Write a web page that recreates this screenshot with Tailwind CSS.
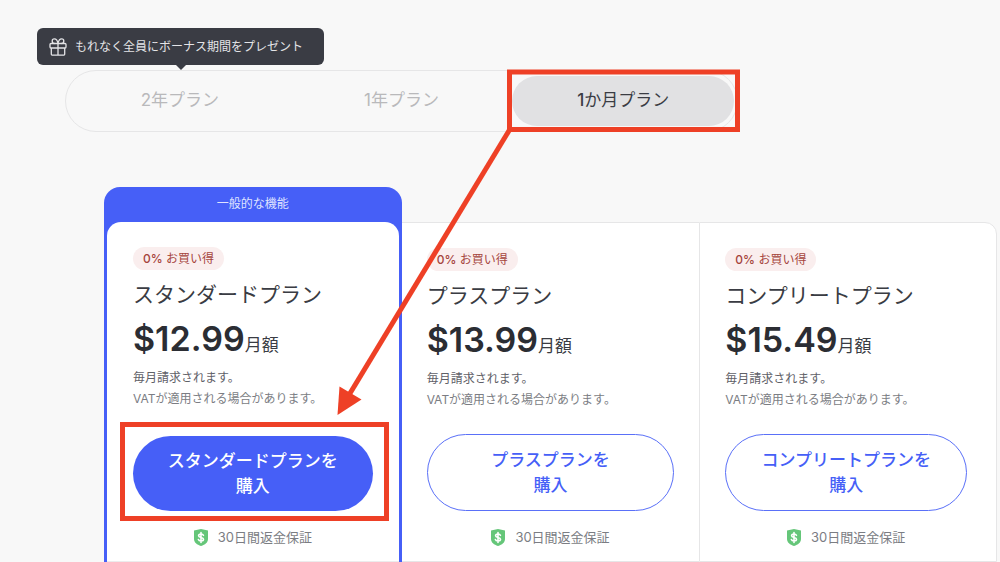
<!DOCTYPE html>
<html lang="ja">
<head>
  <meta charset="UTF-8">
  <meta name="viewport" content="width=device-width, initial-scale=1.0">
  <title>料金プラン</title>
  <script src="https://cdn.jsdelivr.net/npm/@tailwindcss/browser@4"></script>
</head>
<body class="relative bg-[#f8f8f8] font-['Inter','Noto_Sans_CJK_JP',sans-serif] text-[#3a3c43] overflow-x-hidden">
  <svg class="hidden">
    <symbol id="shield" viewBox="0 0 14 17">
      <path fill="#65c679" d="M7 0l7 1.6v8.2c0 3.9-2.9 6-7 7.2-4.100-1.200-7-3.300-7-7.200V1.600z"/>
      <path fill="none" stroke="#fff" stroke-width="1.6" stroke-linecap="round" d="M9.400 6.300C9 5.300 8.100 5 7 5 5.600 5 4.600 5.600 4.600 6.700c0 2.500 4.900 1.100 4.900 3.600C9.500 11.400 8.400 12 7 12s-2.300-.500-2.600-1.500M7 3.600v9.800"/>
    </symbol>
  </svg>

  <!-- Plan length -->
  <header class="relative pl-[65px] pr-[262px] pt-[70px]">
    <div class="absolute left-[37px] top-[28px] h-[37px] w-[287px] rounded-md bg-[#3a3c44] text-[#e4e4e7] flex items-center gap-2 px-3">
      <svg class="size-[18px] shrink-0" viewBox="0 0 18 18" fill="none" stroke="currentColor" stroke-width="1.300" stroke-linejoin="round">
        <rect x="1" y="5.500" width="16" height="4.500" rx="1"/>
        <path d="M2.300 10v6a1.200 1.200 0 0 0 1.200 1.200h11a1.200 1.200 0 0 0 1.200-1.200v-6M9 5.500v11.700M9 5.500C8.500 2.500 7 .900 5.300.900 3.900.900 3.200 1.900 3.200 3c0 1.500 1 2.500 2.300 2.500M9 5.500C9.500 2.500 11 .900 12.700.900c1.400 0 2.100 1 2.100 2.100 0 1.500-1 2.500-2.300 2.500"/>
      </svg>
      <span class="text-xs whitespace-nowrap">もれなく全員にボーナス期間をプレゼント</span>
      <svg class="absolute left-[139px] top-full w-[10px] h-[5px]" viewBox="0 0 10 5"><path fill="#3a3c44" d="M0 0h10L5 5z"/></svg>
    </div>
    <div role="tablist" class="grid grid-cols-3 rounded-full border border-[#e6e6e7] px-[3px] py-[5px] text-[17px] text-[#b9b9bb]">
      <button type="button" role="tab" aria-selected="false" class="h-[50px] rounded-full">2年プラン</button>
      <button type="button" role="tab" aria-selected="false" class="h-[50px] rounded-full">1年プラン</button>
      <button type="button" role="tab" aria-selected="true" class="h-[50px] rounded-full bg-[#e1e1e3] text-[#3a3c43]"><span class="font-medium">1</span>か月プラン</button>
    </div>
  </header>

  <!-- Plans -->
  <main class="grid grid-cols-3 items-end pl-[104px] pr-[3px] pt-[55px]">
    <section class="rounded-t-2xl bg-[#465ff7] px-[3px]">
      <p class="h-[35px] pt-px text-center text-xs leading-8 text-[#dfe3ff]">一般的な機能</p>
      <div class="rounded-t-[14px] bg-white border-b border-[#ececed] px-[26px] pt-[25px] pb-[13px]">
        <span class="block w-fit h-[23px] rounded-full bg-[#faeeee] px-[10px] text-xs leading-[23px] text-[#a5443c]"><span class="font-medium">0%</span> お買い得</span>
        <h2 class="mt-[11px] text-[21px] leading-7 whitespace-nowrap">スタンダードプラン</h2>
        <p class="mt-2 h-11 leading-[44px] whitespace-nowrap"><span class="text-[34px] font-semibold text-[#2b2d33]">$12.99</span><span class="text-[17px]">月額</span></p>
        <p class="mt-[6px] text-xs leading-[21px] text-[#5f6168]">毎月請求されます。</p>
        <p class="text-xs leading-[21px] text-[#7b7d83] whitespace-nowrap">VATが適用される場合があります。</p>
        <button type="button" class="mt-[27px] block w-full h-[75px] rounded-full bg-[#465ff7] text-[17px] leading-[25px] font-medium text-white">スタンダードプランを<br>購入</button>
        <p class="mt-4 flex items-center justify-center gap-[10px] text-[13px] leading-[21px] text-[#7b7d83]">
          <svg class="w-[14px] h-[17px]"><use href="#shield"/></svg>30日間返金保証
        </p>
      </div>
    </section>

    <section class="bg-white border-y border-[#e6e6e7] px-[25px] pt-[25px] pb-[13px]">
      <span class="block w-fit h-[23px] rounded-full bg-[#faeeee] px-[10px] text-xs leading-[23px] text-[#a5443c]"><span class="font-medium">0%</span> お買い得</span>
      <h2 class="mt-[11px] text-[21px] leading-7 whitespace-nowrap">プラスプラン</h2>
      <p class="mt-2 h-11 leading-[44px] whitespace-nowrap"><span class="text-[34px] font-semibold text-[#2b2d33]">$13.99</span><span class="text-[17px]">月額</span></p>
      <p class="mt-[6px] text-xs leading-[21px] text-[#5f6168]">毎月請求されます。</p>
      <p class="text-xs leading-[21px] text-[#7b7d83] whitespace-nowrap">VATが適用される場合があります。</p>
      <button type="button" class="mt-6 block w-full h-[77px] rounded-full border border-[#5a70f8] text-[17px] leading-[25px] font-medium text-[#465ff7]">プラスプランを<br>購入</button>
      <p class="mt-4 flex items-center justify-center gap-[10px] text-[13px] leading-[21px] text-[#7b7d83]">
        <svg class="w-[14px] h-[17px]"><use href="#shield"/></svg>30日間返金保証
      </p>
    </section>

    <section class="bg-white border border-[#e6e6e7] rounded-tr-xl pl-[25px] pr-[29px] pt-[25px] pb-[13px]">
      <span class="block w-fit h-[23px] rounded-full bg-[#faeeee] px-[10px] text-xs leading-[23px] text-[#a5443c]"><span class="font-medium">0%</span> お買い得</span>
      <h2 class="mt-[11px] text-[21px] leading-7 whitespace-nowrap">コンプリートプラン</h2>
      <p class="mt-2 h-11 leading-[44px] whitespace-nowrap"><span class="text-[34px] font-semibold text-[#2b2d33]">$15.49</span><span class="text-[17px]">月額</span></p>
      <p class="mt-[6px] text-xs leading-[21px] text-[#5f6168]">毎月請求されます。</p>
      <p class="text-xs leading-[21px] text-[#7b7d83] whitespace-nowrap">VATが適用される場合があります。</p>
      <button type="button" class="mt-6 block w-full h-[77px] rounded-full border border-[#5a70f8] text-[17px] leading-[25px] font-medium text-[#465ff7]">コンプリートプランを<br>購入</button>
      <p class="mt-4 flex items-center justify-center gap-[10px] text-[13px] leading-[21px] text-[#7b7d83]">
        <svg class="w-[14px] h-[17px]"><use href="#shield"/></svg>30日間返金保証
      </p>
    </section>
  </main>

  <!-- Callouts -->
  <svg class="absolute left-0 top-0 w-[1000px] h-[562px] pointer-events-none" viewBox="0 0 1000 562" fill="none" stroke="#ee4026" stroke-width="5" aria-hidden="true">
    <rect x="509.500" y="72" width="228" height="57.500"/>
    <rect x="122.500" y="424.500" width="264" height="94"/>
    <path d="M510 129L349 395"/>
    <path d="M339.500 386.500L361.500 399.500L337.500 415z" fill="#ee4026" stroke="none"/>
  </svg>
</body>
</html>
